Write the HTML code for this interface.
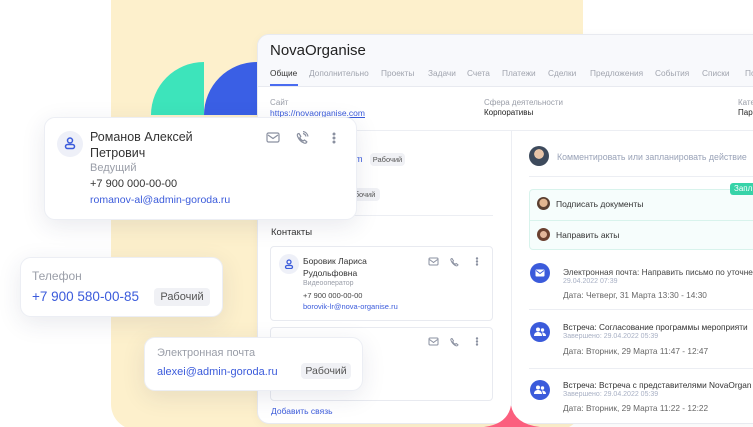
<!DOCTYPE html>
<html><head><meta charset="utf-8"><style>
*{margin:0;padding:0;box-sizing:border-box}
html,body{width:753px;height:427px;overflow:hidden}
body{background:#fff;position:relative;font-family:"Liberation Sans","DejaVu Sans",sans-serif;color:#333}
.a{position:absolute;white-space:nowrap}
.card{position:absolute;background:#fff;border-radius:11px;box-shadow:0 6px 24px rgba(40,50,90,.10);border:1px solid #eceef4}
.tag{position:absolute;background:#f0f1f5;border-radius:4px;color:#555;text-align:center}
.blue{color:#3b5bdb}
.gray{color:#9a9ea8}
</style></head><body>
<div class="a" style="left:111px;top:-30px;width:472px;height:460px;background:#fdf0cc;border-radius:26px"></div>
<div class="a" style="left:151px;top:62px;width:53px;height:53px;border-radius:53px 0 0 0;background:#3de4bb"></div>
<div class="a" style="left:204px;top:62px;width:53px;height:53px;border-radius:53px 0 0 0;background:#3a5fe5"></div>

<!-- main panel -->
<div class="a" style="left:257px;top:34px;width:510px;height:390px;background:#fff;border-radius:12px;border:1px solid #e8eaf0;box-shadow:0 2px 10px rgba(0,0,0,.04);overflow:hidden">
 <div style="position:absolute;left:0;top:0;width:100%;height:52px;background:#f8f9fc;border-bottom:1px solid #e8eaf0"></div>
</div>
<svg class="a" style="left:480px;top:400px" width="70" height="27"><path d="M4 27 Q28 24 31 5 Q34 24 60 27 Z" fill="#fb5f7e"/></svg>
<div class="a" style="left:270px;top:42px;font-size:15px;color:#222">NovaOrganise</div>
<div class="a" style="top:68px;font-size:8.3px;color:#a0a4ae;left:0">
<span class="a" style="left:270px;color:#333">Общие</span><span class="a" style="left:309px">Дополнительно</span><span class="a" style="left:381px">Проекты</span><span class="a" style="left:428px">Задачи</span><span class="a" style="left:467px">Счета</span><span class="a" style="left:502px">Платежи</span><span class="a" style="left:548px">Сделки</span><span class="a" style="left:590px">Предложения</span><span class="a" style="left:655px">События</span><span class="a" style="left:702px">Списки</span><span class="a" style="left:745px">По</span></div>
<div class="a" style="left:270px;top:84px;width:28px;height:2px;background:#4a6cf0"></div>
<div class="a gray" style="left:270px;top:98px;font-size:8px">Сайт</div>
<div class="a blue" style="left:270px;top:108px;font-size:8.5px;text-decoration:underline">https://novaorganise.com</div>
<div class="a gray" style="left:484px;top:98px;font-size:8px">Сфера деятельности</div>
<div class="a" style="left:484px;top:108px;font-size:8px;color:#222">Корпоративы</div>
<div class="a gray" style="left:738px;top:98px;font-size:8px">Кате</div>
<div class="a" style="left:738px;top:108px;font-size:8px;color:#222">Пар</div>
<div class="a" style="left:257px;top:130px;width:496px;height:1px;background:#eceef3"></div>
<div class="a" style="left:511px;top:130px;width:1px;height:276px;background:#eceef3"></div>

<!-- left column -->
<div class="a blue" style="left:350px;top:154px;font-size:9px">om</div>
<div class="tag" style="left:370px;top:153px;width:35px;height:13px;font-size:7.5px;line-height:13px">Рабочий</div>
<div class="tag" style="left:350px;top:188px;width:30px;height:13px;font-size:7.5px;line-height:13px">бочий</div>
<div class="a" style="left:270px;top:215px;width:223px;height:1px;background:#eceef3"></div>
<div class="a" style="left:271px;top:227px;font-size:9.5px;color:#333">Контакты</div>
<div class="a" style="left:270px;top:246px;width:223px;height:75px;border:1px solid #e8eaf0;border-radius:4px"></div>
<div class="a" style="left:279px;top:254px;width:20px;height:20px;border-radius:50%;background:#eef0f8"></div>
<svg class="a" style="left:284px;top:259px" width="10" height="10"><circle cx="5" cy="3" r="2" fill="none" stroke="#3b5bdb" stroke-width="1.3"/><rect x="1.5" y="6.5" width="7" height="3" rx="1.5" fill="none" stroke="#3b5bdb" stroke-width="1.3"/></svg>
<div class="a" style="left:303px;top:256px;font-size:8.5px;line-height:11.5px;color:#333">Боровик Лариса<br>Рудольфовна</div>
<div class="a gray" style="left:303px;top:280px;font-size:7px">Видеооператор</div>
<div class="a" style="left:303px;top:291px;font-size:7.5px;color:#444">+7 900 000-00-00</div>
<div class="a blue" style="left:303px;top:302px;font-size:7.5px">borovik-lr@nova-organise.ru</div>
<div class="a" style="left:270px;top:327px;width:223px;height:74px;border:1px solid #e8eaf0;border-radius:4px"></div>
<div class="a blue" style="left:271px;top:406px;font-size:8.5px">Добавить связь</div>
<svg class="a" style="left:428px;top:257px" width="60" height="90" fill="none" stroke="#8a90a0" stroke-width="1">
 <rect x="1" y="1" width="9" height="7" rx="1"/><path d="M1.5 2.5l4 3 4-3"/>
 <path d="M24 1.5c-1 0-1.5 1-1 2 1 2.5 3 4.5 5 5.3 1 .3 2-.2 2-1l-1.8-1.3-1 .8c-1-.5-2-1.5-2.5-2.5l.8-1z"/>
 <circle cx="49" cy="1.5" r=".7" fill="#8a90a0"/><circle cx="49" cy="4.5" r=".7" fill="#8a90a0"/><circle cx="49" cy="7.5" r=".7" fill="#8a90a0"/>
 <g transform="translate(0,80)"><rect x="1" y="1" width="9" height="7" rx="1"/><path d="M1.5 2.5l4 3 4-3"/>
 <path d="M24 1.5c-1 0-1.5 1-1 2 1 2.5 3 4.5 5 5.3 1 .3 2-.2 2-1l-1.8-1.3-1 .8c-1-.5-2-1.5-2.5-2.5l.8-1z"/>
 <circle cx="49" cy="1.5" r=".7" fill="#8a90a0"/><circle cx="49" cy="4.5" r=".7" fill="#8a90a0"/><circle cx="49" cy="7.5" r=".7" fill="#8a90a0"/></g>
</svg>

<!-- right column -->
<div class="a" style="left:529px;top:146px;width:20px;height:20px;border-radius:50%;background:radial-gradient(circle at 50% 40%,#e7c4a8 0 30%,#3d4a5c 32%)"></div>
<div class="a" style="left:557px;top:152px;font-size:8.8px;color:#9aa3b8">Комментировать или запланировать действие</div>
<div class="a" style="left:529px;top:176px;width:224px;height:1px;background:#eceef3"></div>
<div class="a" style="left:529px;top:189px;width:240px;height:61px;background:#f6fdfc;border:1px solid #d8f3ec;border-radius:4px"></div>
<div class="a" style="left:529px;top:220px;width:224px;height:1px;background:#d8f3ec"></div>
<div class="a" style="left:730px;top:183px;width:30px;height:12px;background:#37d3a8;border-radius:3px;color:#fff;font-size:8px;line-height:12px;padding-left:4px">Запл</div>
<div class="a" style="left:537px;top:197px;width:13px;height:13px;border-radius:50%;background:radial-gradient(circle at 50% 45%,#e3b590 0 40%,#5a3e30 45%)"></div>
<div class="a" style="left:556px;top:199px;font-size:8.5px;color:#333">Подписать документы</div>
<div class="a" style="left:537px;top:228px;width:13px;height:13px;border-radius:50%;background:radial-gradient(circle at 50% 50%,#e2b59a 0 35%,#6b4030 40%)"></div>
<div class="a" style="left:556px;top:230px;font-size:8.5px;color:#333">Направить акты</div>

<div class="a" style="left:530px;top:263px;width:20px;height:20px;border-radius:50%;background:#3b5bdb"></div>
<svg class="a" style="left:535px;top:268px" width="10" height="10"><rect x="0.5" y="1.5" width="9" height="7" rx="1" fill="#fff"/><path d="M1 2.5l4 3 4-3" stroke="#3b5bdb" fill="none"/></svg>
<div class="a" style="left:563px;top:267px;font-size:8.3px;color:#444">Электронная почта: Направить письмо по уточне</div>
<div class="a" style="left:563px;top:278px;font-size:7px;color:#a8b0c4">29.04.2022 07:39</div>
<div class="a" style="left:563px;top:290px;font-size:8.3px;color:#666">Дата: Четверг, 31 Марта 13:30 - 14:30</div>
<div class="a" style="left:529px;top:309px;width:224px;height:1px;background:#eceef3"></div>

<div class="a" style="left:530px;top:322px;width:20px;height:20px;border-radius:50%;background:#3b5bdb"></div>
<svg class="a" style="left:534px;top:327px" width="12" height="10" fill="#fff"><circle cx="4" cy="2.5" r="2"/><circle cx="8.5" cy="3" r="1.7"/><path d="M0 9c0-3 2-4 4-4s4 1 4 4z"/><path d="M8 5.5c2 0 4 1 4 3.5H9z"/></svg>
<div class="a" style="left:563px;top:322px;font-size:8.3px;color:#333">Встреча: Согласование программы мероприяти</div>
<div class="a" style="left:563px;top:333px;font-size:7px;color:#a8b0c4">Завершено: 29.04.2022 05:39</div>
<div class="a" style="left:563px;top:346px;font-size:8.3px;color:#666">Дата: Вторник, 29 Марта 11:47 - 12:47</div>
<div class="a" style="left:529px;top:368px;width:224px;height:1px;background:#eceef3"></div>

<div class="a" style="left:530px;top:380px;width:20px;height:20px;border-radius:50%;background:#3b5bdb"></div>
<svg class="a" style="left:534px;top:385px" width="12" height="10" fill="#fff"><circle cx="4" cy="2.5" r="2"/><circle cx="8.5" cy="3" r="1.7"/><path d="M0 9c0-3 2-4 4-4s4 1 4 4z"/><path d="M8 5.5c2 0 4 1 4 3.5H9z"/></svg>
<div class="a" style="left:563px;top:380px;font-size:8.3px;color:#333">Встреча: Встреча с представителями NovaOrgan</div>
<div class="a" style="left:563px;top:391px;font-size:7px;color:#a8b0c4">Завершено: 29.04.2022 05:39</div>
<div class="a" style="left:563px;top:403px;font-size:8.3px;color:#666">Дата: Вторник, 29 Марта 11:22 - 12:22</div>

<!-- card 1 -->
<div class="card" style="left:44px;top:117px;width:313px;height:103px"></div>
<div class="a" style="left:57px;top:131px;width:26px;height:26px;border-radius:50%;background:#eef0f8"></div>
<svg class="a" style="left:64px;top:137px" width="12" height="13"><circle cx="6" cy="3.5" r="2.5" fill="none" stroke="#3b5bdb" stroke-width="1.5"/><rect x="1.5" y="7.5" width="9" height="4" rx="2" fill="none" stroke="#3b5bdb" stroke-width="1.5"/></svg>
<div class="a" style="left:90px;top:129px;font-size:12.5px;line-height:16px;color:#333">Романов Алексей<br>Петрович</div>
<div class="a gray" style="left:90px;top:162px;font-size:11px">Ведущий</div>
<div class="a" style="left:90px;top:178px;font-size:11px;color:#333">+7 900 000-00-00</div>
<div class="a blue" style="left:90px;top:194px;font-size:10.5px">romanov-al@admin-goroda.ru</div>
<svg class="a" style="left:266px;top:131px" width="80" height="16" fill="none" stroke="#8a90a0" stroke-width="1.2">
 <rect x="1" y="2" width="12" height="9" rx="1.5"/><path d="M2 4l5 3.5 5-3.5"/>
 <path d="M33 2.5c-1.5 0-2 1.3-1.5 2.6 1.3 3.3 4 6 6.7 7 1.4.4 2.6-.3 2.6-1.4l-2.4-1.7-1.3 1c-1.4-.7-2.7-2-3.3-3.3l1-1.3z"/><path d="M37 2.5a4 4 0 0 1 3 3M37 0.5a6 6 0 0 1 5 5"/>
 <circle cx="68" cy="3" r=".9" fill="#8a90a0"/><circle cx="68" cy="7" r=".9" fill="#8a90a0"/><circle cx="68" cy="11" r=".9" fill="#8a90a0"/>
</svg>

<!-- card 2 -->
<div class="card" style="left:20px;top:257px;width:203px;height:60px"></div>
<div class="a gray" style="left:32px;top:269px;font-size:12px">Телефон</div>
<div class="a blue" style="left:32px;top:289px;font-size:13.5px">+7 900 580-00-85</div>
<div class="tag" style="left:154px;top:288px;width:56px;height:18px;font-size:11px;line-height:18px">Рабочий</div>

<!-- card 3 -->
<div class="card" style="left:144px;top:337px;width:219px;height:54px"></div>
<div class="a gray" style="left:157px;top:347px;font-size:11px">Электронная почта</div>
<div class="a blue" style="left:157px;top:366px;font-size:11px">alexei@admin-goroda.ru</div>
<div class="tag" style="left:301px;top:363px;width:50px;height:16px;font-size:10.5px;line-height:16px">Рабочий</div>
</body></html>
